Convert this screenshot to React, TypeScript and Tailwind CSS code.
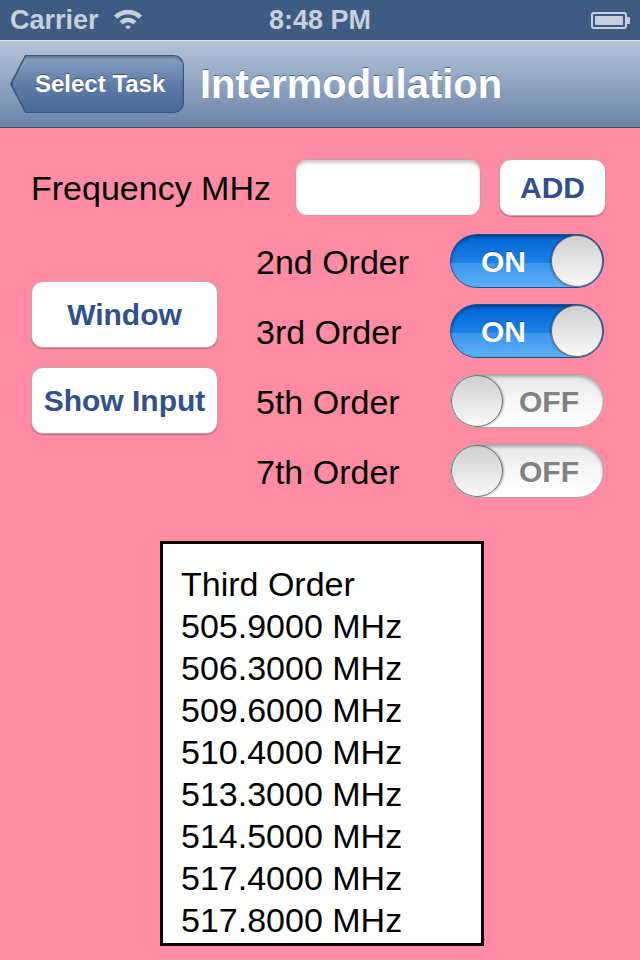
import React from "react";

const orders = [
  { label: "2nd Order", on: true },
  { label: "3rd Order", on: true },
  { label: "5th Order", on: false },
  { label: "7th Order", on: false },
];

const results = [
  "Third Order",
  "505.9000 MHz",
  "506.3000 MHz",
  "509.6000 MHz",
  "510.4000 MHz",
  "513.3000 MHz",
  "514.5000 MHz",
  "517.4000 MHz",
  "517.8000 MHz",
];

function WifiIcon() {
  return (
    <svg width="30" height="22" viewBox="0 0 30 22" className="text-[#c5cfdd]">
      <path d="M1 7.5 A20 20 0 0 1 29 7.5 L25.8 10.8 A15.5 15.5 0 0 0 4.2 10.8 Z" fill="currentColor" />
      <path d="M6.6 13.2 A12 12 0 0 1 23.4 13.2 L20.2 16.4 A7.5 7.5 0 0 0 9.8 16.4 Z" fill="currentColor" />
      <path d="M12.2 18.8 A4 4 0 0 1 17.8 18.8 L15 21.6 Z" fill="currentColor" />
    </svg>
  );
}

function Battery() {
  return (
    <div className="flex items-center">
      <div className="w-[36px] h-[17px] border-[2px] border-[#c5cfdd] rounded-[3px] p-[2px]">
        <div className="w-full h-full bg-[#c5cfdd] rounded-[1px]" />
      </div>
      <div className="w-[3px] h-[7px] bg-[#c5cfdd] rounded-r-[1px]" />
    </div>
  );
}

function Toggle({ on }: { on: boolean }) {
  if (on) {
    return (
      <div className="relative w-[154px] h-[54px] rounded-full border border-[#1b4f8f] bg-gradient-to-b from-[#0064d2] via-[#1a7fe6] to-[#5aaef5] overflow-hidden shadow-[inset_0_2px_3px_rgba(0,0,0,0.35)]">
        <div className="absolute left-0 right-0 bottom-0 h-[24px] bg-[#62b2f7]/40" />
        <span className="absolute left-[30px] top-0 h-full flex items-center text-[30px] font-bold text-white [text-shadow:0_-1px_0_rgba(0,0,0,0.35)]">
          ON
        </span>
        <div className="absolute right-0 top-0 w-[52px] h-[52px] rounded-full border border-[#6d6d6d] bg-gradient-to-b from-[#cfcfcf] to-[#fafafa] shadow-[-1px_0_2px_rgba(0,0,0,0.3)]" />
      </div>
    );
  }
  return (
    <div className="relative w-[154px] h-[54px] rounded-full border border-[#a8a8a8] bg-gradient-to-b from-[#e6e6e6] via-[#f7f7f7] to-[#ffffff] overflow-hidden shadow-[inset_0_2px_3px_rgba(0,0,0,0.25)]">
      <span className="absolute right-[24px] top-0 h-full flex items-center text-[30px] font-bold text-[#818181] [text-shadow:0_1px_0_rgba(255,255,255,0.8)]">
        OFF
      </span>
      <div className="absolute left-0 top-0 w-[52px] h-[52px] rounded-full border border-[#6d6d6d] bg-gradient-to-b from-[#cfcfcf] to-[#fafafa] shadow-[1px_0_2px_rgba(0,0,0,0.3)]" />
    </div>
  );
}

function RoundButton({ label, className }: { label: string; className: string }) {
  return (
    <button
      className={`${className} rounded-[12px] bg-white border border-[#c2a4ab] shadow-[0_1px_1px_rgba(120,60,70,0.45)] text-[30px] font-bold text-[#32508a] flex items-center justify-center`}
    >
      {label}
    </button>
  );
}

export default function App() {
  return (
    <div className="w-[640px] h-[960px] overflow-hidden bg-[#ff8ca3] font-['Liberation_Sans',Arial,sans-serif]">
      {/* status bar */}
      <div className="h-[40px] bg-[#3f5b81] flex items-center px-[10px] relative">
        <span className="text-[27px] font-bold text-[#c5cfdd] leading-none">Carrier</span>
        <div className="ml-[14px] mt-[-2px]">
          <WifiIcon />
        </div>
        <span className="absolute left-0 right-0 text-center text-[27px] font-bold text-[#c5cfdd] leading-none pointer-events-none">
          8:48 PM
        </span>
        <div className="ml-auto">
          <Battery />
        </div>
      </div>

      {/* navigation bar */}
      <div className="h-[88px] border-t border-[#dbe3ee] border-b border-b-[#3c5274] bg-gradient-to-b from-[#b5c4d8] via-[#8fa3c0] to-[#6b84a7] flex items-center pl-[10px]">
        <div className="h-[58px] w-[174px] bg-[#3b5479] rounded-r-[10px] [clip-path:polygon(0_50%,15px_0,100%_0,100%_100%,15px_100%)] p-[1px] pl-[2px]">
          <div className="h-full w-full rounded-r-[9px] bg-gradient-to-b from-[#8aa1c3] via-[#5f7ca7] to-[#4a6996] [clip-path:polygon(0_50%,14px_0,100%_0,100%_100%,14px_100%)] flex items-center pl-[23px] shadow-[inset_0_2px_2px_rgba(0,0,0,0.25)]">
            <span className="text-[24px] font-bold text-white [text-shadow:0_-1px_0_rgba(0,0,0,0.4)]">Select Task</span>
          </div>
        </div>
        <span className="ml-[16px] text-[40px] font-bold text-white [text-shadow:0_-1px_0_rgba(40,60,90,0.6)]">
          Intermodulation
        </span>
      </div>

      {/* form */}
      <div className="pt-[31px] pl-[31px]">
        <div className="flex items-center h-[57px]">
          <span className="text-[34px] text-black w-[264px] pt-[2px]">Frequency MHz</span>
          <div className="w-[186px] h-[57px] rounded-[12px] bg-white border border-[#c79aa4] shadow-[inset_0_3px_3px_rgba(0,0,0,0.2)]" />
          <RoundButton label="ADD" className="ml-[18px] w-[107px] h-[57px]" />
        </div>

        <div className="flex mt-[10px]">
          <div className="w-[187px] pt-[55px] flex flex-col gap-[19px]">
            <RoundButton label="Window" className="w-[187px] h-[67px]" />
            <RoundButton label="Show Input" className="w-[187px] h-[67px]" />
          </div>
          <div className="ml-[38px] flex flex-col">
            {orders.map((o) => (
              <div key={o.label} className="h-[70px] flex items-center">
                <span className="w-[194px] text-[34px] text-black pt-[2px]">{o.label}</span>
                <Toggle on={o.on} />
              </div>
            ))}
          </div>
        </div>
      </div>

      {/* results */}
      <div className="ml-[160px] mt-[35px] w-[324px] h-[405px] border-[3px] border-black bg-white pt-[19px] pl-[18px]">
        {results.map((r) => (
          <div key={r} className="text-[34px] leading-[42px] text-black">
            {r}
          </div>
        ))}
      </div>
    </div>
  );
}
